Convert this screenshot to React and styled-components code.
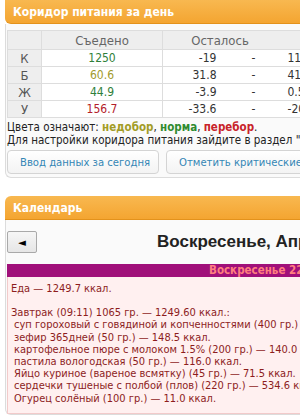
import React from "react";
import styled, { createGlobalStyle } from "styled-components";

const GlobalStyle = createGlobalStyle`
  html, body {
    margin: 0;
    padding: 0;
    overflow: hidden;
    background: #ffffff;
  }
  body {
    font-family: "DejaVu Sans Condensed", "DejaVu Sans", Tahoma, sans-serif;
    font-size: 11.5px;
    color: #222;
  }
`;

const Page = styled.div`
  width: 360px;
  padding: 0 0 0 5px;
`;

const Panel = styled.section`
  margin-bottom: 18px;
`;

const PanelHeader = styled.div`
  height: ${({ $h }) => $h}px;
  box-sizing: border-box;
  padding: 0 8px;
  display: flex;
  align-items: center;
  background: linear-gradient(#f8b850, #f4a531);
  border-bottom: 1px solid #e3921c;
  border-radius: ${({ $top }) => ($top ? "6px 6px 0 0" : "0 0 0 6px")};
  color: #fff;
  font-weight: bold;
  font-size: 12px;
`;

const PanelBody = styled.div`
  border-left: 1px solid #dcdcdc;
  border-bottom: 1px solid #dcdcdc;
  border-radius: 0 0 0 6px;
  padding: ${({ $pad }) => $pad};
  background: #fafafa;
`;

const Table = styled.table`
  border-collapse: collapse;
  table-layout: fixed;
  width: 304px;
  font-size: 12px;
`;

const HeadCell = styled.th`
  background: #eeeeee;
  color: #666;
  font-weight: normal;
  font-size: 13px;
  height: 18px;
  padding: 0 ${({ $pr }) => $pr || 0}px 0 0;
  border: 1px solid #dddddd;
  text-align: center;
`;

const LabelCell = styled.td`
  background: #eeeeee;
  color: #555;
  height: 16px;
  padding: 0;
  border: 1px solid #dddddd;
  text-align: center;
  font-size: 13px;
`;

const EatenCell = styled.td`
  background: #fff;
  padding: 0;
  border: 1px solid #dddddd;
  text-align: center;
  color: ${({ $c }) => $c};
`;

const RangeCell = styled.td`
  background: #fff;
  padding: 0 ${({ $pr }) => $pr || 0}px 0 0;
  border-top: 1px solid #dddddd;
  border-bottom: 1px solid #dddddd;
  text-align: ${({ $align }) => $align};
  color: #333;
  white-space: nowrap;
`;

const Legend = styled.div`
  margin-top: 3px;
  line-height: 13px;
  font-size: 11.5px;
  white-space: nowrap;
  color: #222;
`;

const Mark = styled.b`
  color: ${({ $c }) => $c};
`;

const ButtonRow = styled.div`
  display: flex;
  gap: 7px;
  margin-top: 3px;
  padding-bottom: 3px;
`;

const Button = styled.button`
  height: 24px;
  width: ${({ $w }) => $w}px;
  padding: 0 12px;
  border: 1px solid #d4d4d4;
  border-radius: 4px;
  background: linear-gradient(#ffffff, #f3f3f3);
  color: #3486b5;
  font-family: inherit;
  font-size: 11.2px;
  text-align: left;
  white-space: nowrap;
  flex: none;
`;

const NavRow = styled.div`
  display: flex;
  align-items: center;
  height: 22px;
  margin-bottom: 11px;
`;

const ArrowButton = styled.button`
  width: 30px;
  height: 22px;
  border: 1px solid #a9a9a9;
  border-radius: 2px;
  background: linear-gradient(#f6f6f6, #e6e6e6);
  color: #000;
  font-size: 11px;
  padding: 0;
  font-family: inherit;
  flex: none;
`;

const DayTitle = styled.div`
  margin-left: 120px;
  font-family: "Liberation Sans", Arial, sans-serif;
  font-weight: bold;
  font-size: 17px;
  color: #222;
  white-space: nowrap;
`;

const DayBar = styled.div`
  background: #a0107a;
  height: 13px;
  padding-left: 202px;
  color: #ff7f7f;
  font-weight: bold;
  font-size: 11.5px;
  line-height: 13px;
  white-space: nowrap;
`;

const DayBox = styled.div`
  background: #fff0f0;
  border: 1px solid #f2caca;
  border-top: none;
  padding: 6px 3px 8px;
  color: #8d1d1d;
  font-size: 11px;
  line-height: 12.2px;
  white-space: nowrap;
`;

const Line = styled.div`
  padding-left: ${({ $indent }) => ($indent ? 3 : 0)}px;
  margin-top: ${({ $gap }) => ($gap ? 12 : 0)}px;
`;

const rows = [
  { k: "К", eaten: "1250", c: "#2f7f3a", min: "-19", max: "111" },
  { k: "Б", eaten: "60.6", c: "#a19a2c", min: "31.8", max: "41.8" },
  { k: "Ж", eaten: "44.9", c: "#2f7f3a", min: "-3.9", max: "0.5" },
  { k: "У", eaten: "156.7", c: "#b3202a", min: "-33.6", max: "-20.6" },
];

const foods = [
  "суп гороховый с говядиной и копченностями (400 гр.) — 354.0 ккал.",
  "зефир 365дней (50 гр.) — 148.5 ккал.",
  "картофельное пюре с молоком 1.5% (200 гр.) — 140.0 ккал.",
  "пастила вологодская (50 гр.) — 116.0 ккал.",
  "Яйцо куриное (вареное всмятку) (45 гр.) — 71.5 ккал.",
  "сердечки тушеные с полбой (плов) (220 гр.) — 534.6 ккал.",
  "Огурец солёный (100 гр.) — 11.0 ккал.",
];

export default function App() {
  return (
    <Page>
      <GlobalStyle />
      <Panel>
        <PanelHeader $h={24}>Коридор питания за день</PanelHeader>
        <PanelBody $pad="6px 0 0 1px">
          <Table>
            <colgroup>
              <col style={{ width: 34 }} />
              <col style={{ width: 121 }} />
              <col style={{ width: 57 }} />
              <col style={{ width: 68 }} />
              <col style={{ width: 24 }} />
            </colgroup>
            <thead>
              <tr>
                <HeadCell />
                <HeadCell>Съедено</HeadCell>
                <HeadCell colSpan={3} $pr={34}>
                  Осталось
                </HeadCell>
              </tr>
            </thead>
            <tbody>
              {rows.map((r) => (
                <tr key={r.k}>
                  <LabelCell>{r.k}</LabelCell>
                  <EatenCell $c={r.c}>{r.eaten}</EatenCell>
                  <RangeCell $align="right" $pr={3}>
                    {r.min}
                  </RangeCell>
                  <RangeCell $align="center">-</RangeCell>
                  <RangeCell $align="left">{r.max}</RangeCell>
                </tr>
              ))}
            </tbody>
          </Table>
          <Legend>
            Цвета означают: <Mark $c="#a29c25">недобор</Mark>,{" "}
            <Mark $c="#2f8a2f">норма</Mark>, <Mark $c="#c8232a">перебор</Mark>.
            <br />
            Для настройки коридора питания зайдите в раздел "Цели"
          </Legend>
          <ButtonRow>
            <Button $w={152}>Ввод данных за сегодня</Button>
            <Button $w={180}>Отметить критические дни</Button>
          </ButtonRow>
        </PanelBody>
      </Panel>
      <Panel>
        <PanelHeader $h={24} $top>
          Календарь
        </PanelHeader>
        <PanelBody $pad="11px 0 0 1px">
          <NavRow>
            <ArrowButton>◄</ArrowButton>
            <DayTitle>Воскресенье, Апрель 22</DayTitle>
          </NavRow>
          <DayBar>Воскресенье 22 апреля</DayBar>
          <DayBox>
            <Line>Еда — 1249.7 ккал.</Line>
            <Line $gap>Завтрак (09:11) 1065 гр. — 1249.60 ккал.:</Line>
            {foods.map((f) => (
              <Line key={f} $indent>
                {f}
              </Line>
            ))}
          </DayBox>
        </PanelBody>
      </Panel>
    </Page>
  );
}
